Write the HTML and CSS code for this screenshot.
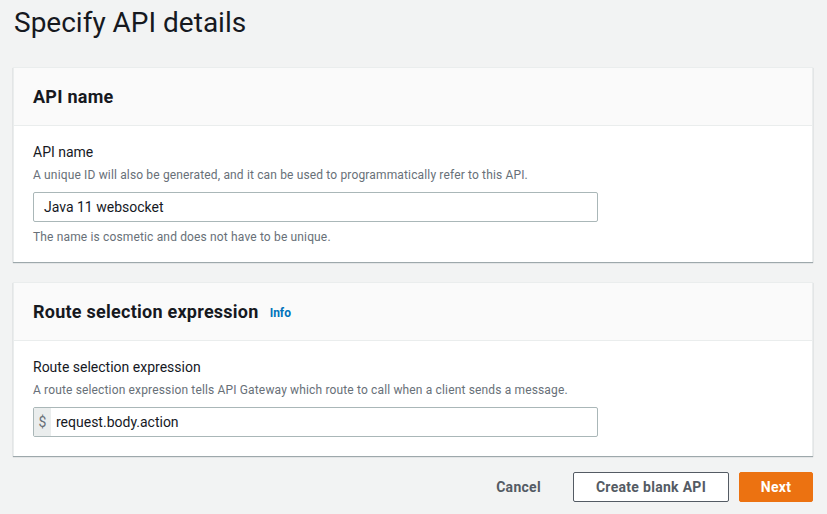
FILE: index.html
```html
<!DOCTYPE html>
<html>
<head>
<meta charset="utf-8">
<link rel="stylesheet" href="styles.css">
</head>
<body>
<div class="page">
  <h1 class="title">Specify API details</h1>

  <section class="card">
    <div class="card-header"><h2>API name</h2></div>
    <div class="card-body">
      <div class="label">API name</div>
      <div class="desc">A unique ID will also be generated, and it can be used to programmatically refer to this API.</div>
      <div class="input"><span class="value">Java 11 websocket</span></div>
      <div class="hint">The name is cosmetic and does not have to be unique.</div>
    </div>
  </section>

  <section class="card">
    <div class="card-header"><h2>Route selection expression</h2><a class="info">Info</a></div>
    <div class="card-body card-body-2">
      <div class="label">Route selection expression</div>
      <div class="desc">A route selection expression tells API Gateway which route to call when a client sends a message.</div>
      <div class="input input-prefixed"><span class="prefix">$</span><span class="value">request.body.action</span></div>
    </div>
  </section>

  <div class="actions">
    <button class="btn btn-link">Cancel</button>
    <button class="btn btn-normal">Create blank API</button>
    <button class="btn btn-primary">Next</button>
  </div>
</div>
</body>
</html>
```

FILE: styles.css
```css
* { box-sizing: border-box; }
html, body { margin: 0; padding: 0; }
body {
  background: #f2f3f3;
  font-family: Roboto, "Liberation Sans", sans-serif;
  color: #16191f;
  width: 827px;
  height: 514px;
  overflow: hidden;
}
.page {
  padding: 0 14px 0 13px;
}
.title {
  margin: 0;
  padding: 6px 0 0 1px;
  font-size: 28px;
  font-weight: 400;
  line-height: 34px;
  height: 67px;
  color: #16191f;
}
.card {
  background: #fff;
  border: 1px solid #eaeded;
  border-bottom: none;
  box-shadow: 0 1px 1px 0 rgba(0, 28, 36, 0.35);
  margin-bottom: 20px;
}
.card-header {
  background: #fafafa;
  border-bottom: 1px solid #eaeded;
  height: 58px;
  padding: 0 19px;
  display: flex;
  align-items: center;
  gap: 11px;
}
.card-header h2 {
  margin: 0;
  font-size: 18px;
  font-weight: 700;
  line-height: 22px;
  letter-spacing: 0.25px;
}
.info {
  font-size: 12px;
  font-weight: 700;
  color: #0073bb;
  padding-top: 3px;
}
.card-body {
  padding: 16px 19px 17px;
}
.card-body-2 { padding-bottom: 19px; }
.label {
  font-size: 14px;
  line-height: 20px;
}
.desc {
  font-size: 12px;
  line-height: 16px;
  color: #687078;
  margin-top: 5px;
  letter-spacing: 0.15px;
}
.input {
  margin-top: 9px;
  width: 565px;
  height: 30px;
  border: 1px solid #aab7b8;
  border-radius: 2px;
  background: #fff;
  display: flex;
  align-items: center;
  font-size: 14px;
  padding: 0 10px;
}
.input-prefixed { padding: 0; }
.prefix {
  background: #eaeded;
  color: #687078;
  width: 17px;
  align-self: stretch;
  display: flex;
  align-items: center;
  justify-content: center;
  font-size: 14px;
}
.input-prefixed .value { padding-left: 5px; }
.hint {
  font-size: 12px;
  line-height: 16px;
  color: #687078;
  margin-top: 7px;
  letter-spacing: 0.15px;
}
.actions {
  display: flex;
  justify-content: flex-end;
  align-items: center;
  gap: 10px;
  margin-top: -4px;
}
.btn {
  font-family: inherit;
  font-size: 14px;
  font-weight: 700;
  height: 30px;
  border-radius: 2px;
  padding: 0 10px;
  cursor: pointer;
  letter-spacing: 0.3px;
}
.btn-link {
  background: transparent;
  border: 1px solid transparent;
  color: #545b64;
  margin-right: 1px;
  padding: 0 20px 0 21px;
}
.btn-normal {
  background: #fff;
  border: 1px solid #545b64;
  color: #545b64;
  width: 156px;
}
.btn-primary {
  background: #ec7211;
  border: 1px solid #ec7211;
  color: #fff;
  width: 74px;
}
```
